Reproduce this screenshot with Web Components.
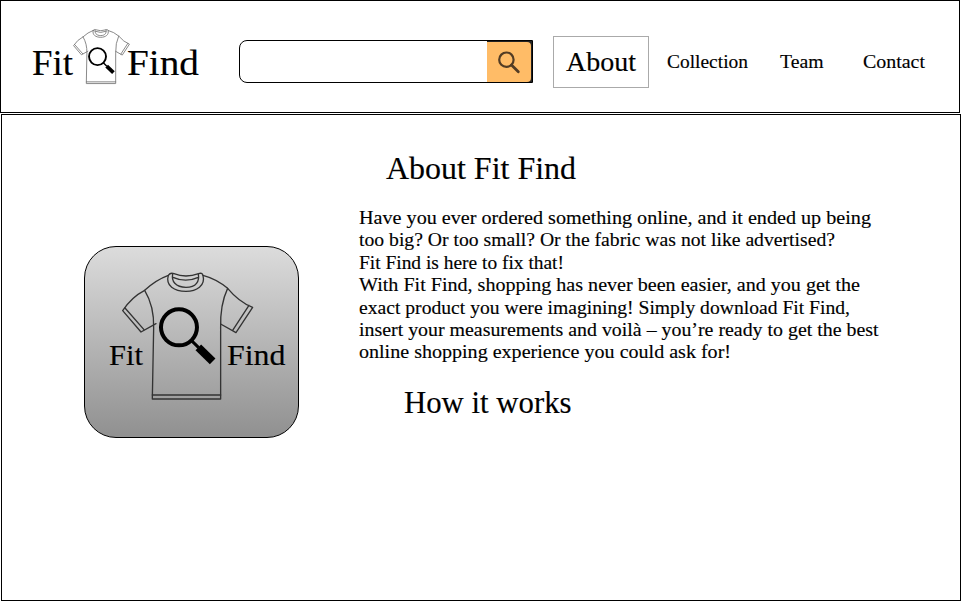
<!DOCTYPE html>
<html lang="en"><head><meta charset="utf-8"><title>Fit Find</title>
<style>
body{margin:0;background:#fff;color:#000;font-family:"Liberation Serif",serif;width:963px;height:602px;overflow:hidden}
</style></head><body>
<fit-page></fit-page>
<script>
const define=(name,html,ready)=>customElements.define(name,class extends HTMLElement{
  connectedCallback(){
    if(this.shadowRoot)return;
    const t=document.createElement('template');t.innerHTML=html;
    this.attachShadow({mode:'open'}).append(t.content.cloneNode(true));
    if(ready)ready(this,this.shadowRoot);
  }
});

/* One line of text, widened so that it fills the width given in "w". */
define('fit-line',`<style>:host{display:block;white-space:nowrap;flex:none}span{display:inline-block;transform-origin:0 0;-webkit-text-stroke:.15px #000}</style><span><slot></slot></span>`,(el,root)=>{
  const w=+el.getAttribute('w'),s=root.querySelector('span');
  el.style.width=w+'px';
  el.style.fontSize=el.getAttribute('size')+'px';
  s.style.transform='scaleX('+w/s.getBoundingClientRect().width+')';
});

define('fit-shirt',`<style>:host{display:block;flex:none}svg{display:block;width:100%;height:100%;overflow:visible}
.s{fill:none;stroke:var(--line,#333);stroke-width:var(--sw,4);stroke-linejoin:round;stroke-linecap:round}
.g{transform:var(--glass,none)}</style>
<svg viewBox="141 112 394 384"><g class="s">
<path d="M280 122Q242 136 209 167Q170 187 143 228L198 292L243 267"/>
<path d="M150 220L207 285M209 167Q238 215 236 280L232 493H437V280Q435 210 458 161"/>
<path d="M384 122Q425 133 458 161Q492 202 533 218L483 294L437 268M522 212L473 287M232 481H437"/>
<path d="M280 122Q286 113 297 117Q332 131 371 117Q381 113 384 122C392 153 365 170 333 170C298 170 271 153 280 122Z"/>
<path d="M293 118C289 139 301 158 333 158C364 158 374 139 370 118M294 128Q332 145 370 128"/></g>
<g class="g" fill="none" stroke="#000"><circle cx="312" cy="278" r="54" stroke-width="12"/><path d="M349 317L371 339" stroke-width="9"/><path d="M370 338L413 380" stroke-width="24"/></g></svg>`);

define('fit-logo',`<style>:host{display:flex;align-items:flex-start;width:168px;height:56px;flex:none}
fit-line{line-height:40px;margin-top:15px}
fit-shirt{width:57px;height:55px;margin-top:1px;margin-right:-3px;--line:#777;--sw:6;--glass:translate(-33px,-1px) scale(1.1)}</style>
<fit-line w="41" size="36">Fit</fit-line><fit-shirt></fit-shirt><fit-line w="72" size="36">Find</fit-line>`);

define('fit-search',`<style>:host{display:flex;box-sizing:border-box;width:294px;height:43px;border:1px solid #000;border-radius:8px 0 0 8px;flex:none}
input{flex:1;min-width:0;border:0;padding:0 10px;background:none;font:20px "Liberation Serif",serif;outline:0}
button{width:45px;padding:0;border:0;background:#222;height:41px}
i{display:block;width:44px;height:40px;margin-top:1px;background:#ffbc67;border-radius:0 4px 4px 0}
svg{display:block;width:44px;height:40px}</style>
<input aria-label="Search"><button aria-label="Search"><i><svg viewBox="1 0 44 40" fill="none" stroke="#533c24"><circle cx="20.4" cy="17.7" r="7.2" stroke-width="2.2"/><path d="M25.5 23L32.3 29.7" stroke-width="2.8" stroke-linecap="round"/></svg></i></button>`);

define('fit-nav',`<style>:host{display:flex;align-items:flex-start;flex:none;line-height:24px}
.on{box-sizing:border-box;width:96px;height:52px;border:1px solid #aaa;padding:8px 0 0 12px;line-height:34px;margin-right:18px}
fit-line{margin-top:14px}.on fit-line{margin:0}</style>
<div class="on"><fit-line w="70" size="28">About</fit-line></div>
<fit-line w="81" size="19.5">Collection</fit-line><fit-line w="43.5" size="19.5" style="margin-left:32px">Team</fit-line><fit-line w="62" size="19.5" style="margin-left:39.5px">Contact</fit-line>`);

define('fit-header',`<style>:host{display:flex;box-sizing:border-box;width:960px;height:113px;border:1px solid #000;padding-left:31px;align-items:flex-start}
fit-logo{margin-top:27px}fit-search{margin:39px 20px 0 39px}fit-nav{margin-top:35px}</style>
<fit-logo></fit-logo><fit-search></fit-search><fit-nav></fit-nav>`);

/* App tile: the wordmark lies over the shirt. */
define('fit-tile',`<style>:host{display:block;position:relative;box-sizing:border-box;width:215px;height:192px;border:1px solid #000;border-radius:32px;background:linear-gradient(#dcdcdc,#909090);flex:none}
fit-shirt{position:absolute;left:37px;top:25px;width:131.3px;height:128px}
fit-line{position:absolute;top:91px;line-height:34px}</style>
<fit-shirt></fit-shirt><fit-line w="34" size="30" style="left:23.5px">Fit</fit-line><fit-line w="58.5" size="30" style="left:141.5px">Find</fit-line>`);

define('fit-about',`<style>:host{display:block;width:530px}
.p{line-height:22.4px;margin:20px 0 21px}.h{line-height:36px}</style>
<fit-line class="h" w="190" size="31" style="margin-left:27px">About Fit Find</fit-line>
<div class="p"><fit-line w="512" size="19.5">Have you ever ordered something online, and it ended up being</fit-line>
<fit-line w="476" size="19.5">too big? Or too small? Or the fabric was not like advertised?</fit-line>
<fit-line w="205" size="19.5">Fit Find is here to fix that!</fit-line>
<fit-line w="501" size="19.5">With Fit Find, shopping has never been easier, and you get the</fit-line>
<fit-line w="491" size="19.5">exact product you were imagining! Simply download Fit Find,</fit-line>
<fit-line w="519.5" size="19.5">insert your measurements and voilà – you’re ready to get the best</fit-line>
<fit-line w="372" size="19.5">online shopping experience you could ask for!</fit-line></div>
<fit-line class="h" w="167.5" size="31" style="margin-left:45px">How it works</fit-line>`);

define('fit-page',`<style>:host{display:block}
main{display:flex;align-items:flex-start;box-sizing:border-box;width:960px;height:487px;margin:1px 0 0 1px;border:1px solid #000;padding-left:82px}
fit-tile{margin-top:131px}fit-about{margin:36px 0 0 60px}</style>
<fit-header></fit-header><main><fit-tile></fit-tile><fit-about></fit-about></main>`);
</script></body></html>
